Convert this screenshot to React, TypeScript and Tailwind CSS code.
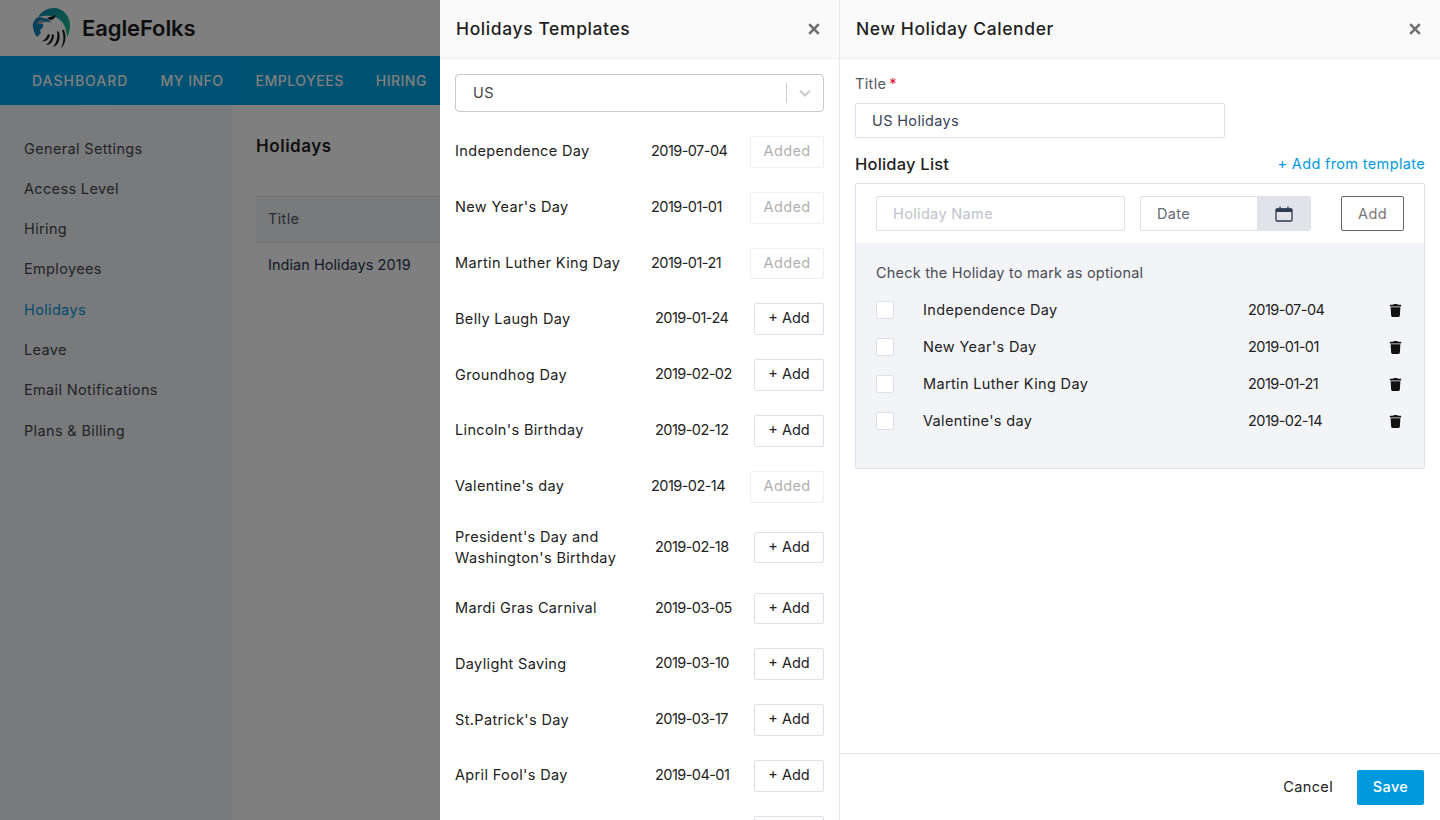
import React from "react";
import { FaTrash } from "react-icons/fa";

const side = ["General Settings", "Access Level", "Hiring", "Employees", "Holidays", "Leave", "Email Notifications", "Plans & Billing"];
const nav = ["DASHBOARD", "MY INFO", "EMPLOYEES", "HIRING"];
const templates: [string, string, boolean][] = [
  ["Independence Day", "2019-07-04", true],
  ["New Year's Day", "2019-01-01", true],
  ["Martin Luther King Day", "2019-01-21", true],
  ["Belly Laugh Day", "2019-01-24", false],
  ["Groundhog Day", "2019-02-02", false],
  ["Lincoln's Birthday", "2019-02-12", false],
  ["Valentine's day", "2019-02-14", true],
  ["President's Day and Washington's Birthday", "2019-02-18", false],
  ["Mardi Gras Carnival", "2019-03-05", false],
  ["Daylight Saving", "2019-03-10", false],
  ["St.Patrick's Day", "2019-03-17", false],
  ["April Fool's Day", "2019-04-01", false],
];
const chosen = [
  ["Independence Day", "2019-07-04"],
  ["New Year's Day", "2019-01-01"],
  ["Martin Luther King Day", "2019-01-21"],
  ["Valentine's day", "2019-02-14"],
];

function Close() {
  return (
    <svg width="12" height="12" viewBox="0 0 12 12" className="shrink-0">
      <path d="M1.2 1.2 10.8 10.8M10.8 1.2 1.2 10.8" stroke="#707070" strokeWidth="2.6" fill="none" />
    </svg>
  );
}

function Eagle() {
  return (
    <svg width="40" height="42" viewBox="0 0 40 42" className="shrink-0">
      <defs>
        <linearGradient id="eg" x1="0" y1="0" x2="1" y2="0.7">
          <stop offset="0" stopColor="#0a86b8" />
          <stop offset="1" stopColor="#19b88a" />
        </linearGradient>
      </defs>
      <path d="M6 10C10 4 16 1 22 1c9 0 16 8 16 17 0 4-1 9-3 12-.5-7-2-13-7-17-5-5-13-5-22-3z" fill="url(#eg)" />
      <path d="M1 21c-1-5 2-10 6-11l7 1.5c3 1 4 2 5 4-3-1-6-1-8 0l-5 .5c1 1 3 1 5 1 1 3-1 5-3 6l1 3c-2 2-3 3-4 4-2-2-3-5-4-9z" fill="#1285b8" />
      <path d="M5 15c2-2 5-2 8-1l-3 2.5c-2 .5-4 .5-5-1.5z" fill="#9aa0a4" />
      <path d="M15 11l9-3c-1 3-3 5-6 5z" fill="#151515" />
      <path d="M16 27c-1 3-3 6-6 7 4 1 7-2 8-6zM20 27c0 4-2 8-6 11 5 0 8-5 8-10zM25 24c1 6 0 11-4 16 5-1 8-8 6-15zM30 23c2 6 2 12-1 18 4-3 6-10 3-18z" fill="#161616" />
    </svg>
  );
}

function Calendar() {
  return (
    <svg width="18" height="16" viewBox="0 0 18 16" className="shrink-0">
      <path d="M1 3.5a1 1 0 0 1 1-1h14a1 1 0 0 1 1 1V6H1z" fill="#2c3a50" />
      <path d="M5 .5v3M13 .5v3" stroke="#2c3a50" strokeWidth="1.3" />
      <rect x="1" y="3" width="16" height="12" rx="1" fill="none" stroke="#2c3a50" strokeWidth="1.3" />
    </svg>
  );
}

function TemplateRow({ name, date, added }: { name: string; date: string; added: boolean }) {
  return (
    <div className="flex items-center">
      <div className="min-w-0 flex-1 -translate-y-px pr-[20px] leading-[21px] text-[#222]">{name}</div>
      <div className="w-[99px] shrink-0 -translate-y-px tracking-[-0.55px] text-[#222]">{date}</div>
      <div
        className={`flex h-[31.8px] shrink-0 items-center justify-center rounded-[2px] border ${
          added ? "w-[74px] border-[#f0f0f3] text-[#b0b0b0]" : "w-[70px] border-[#dfe1ea] tracking-[0px] text-[#222]"
        }`}
      >
        <span className="-translate-y-px">{added ? "Added" : "+ Add"}</span>
      </div>
    </div>
  );
}

export default function App() {
  return (
    <div className="relative h-[820px] w-full overflow-hidden bg-white font-['Inter','Liberation_Sans',sans-serif] text-[14.5px] tracking-[0.35px] text-[#222]">
      {/* Page under the overlay */}
      <div className="flex h-[56px] items-center gap-[10px] bg-white pl-[32px]">
        <Eagle />
        <span className="text-[22px] font-semibold tracking-[-0.1px] text-[#1b1b1b]">EagleFolks</span>
      </div>
      <div className="flex h-[49px] items-center gap-[32px] bg-gradient-to-r from-[#00a4ee] to-[#00a4c8] pl-[32px]">
        {nav.map((n) => (
          <span key={n} className={`text-[14px] font-medium text-white ${n === "DASHBOARD" ? "tracking-[1px]" : "tracking-[0.5px]"}`}>{n}</span>
        ))}
      </div>
      <div className="flex h-[715px]">
        <div className="flex w-[232px] shrink-0 flex-col gap-[19.3px] bg-[#f3f4f8] pl-[24px] pt-[32.5px]">
          {side.map((s) => (
            <div key={s} className={`leading-[21px] ${s === "Holidays" ? "text-[#0099dd]" : "text-[#44474f]"}`}>{s}</div>
          ))}
        </div>
        <div className="flex-1 pl-[24px] pt-[29px]">
          <div className="text-[17px] font-semibold leading-[24px] tracking-[0.55px] text-[#222]">Holidays</div>
          <div className="mt-[38px] flex h-[47px] items-center border-y border-[#dfe1ea] bg-[#f3f4f8] pb-[2px] pl-[12px] text-[#555a68]">Title</div>
          <div className="pl-[12px] pt-[11px] leading-[21px] tracking-[0.05px] text-[#2a3350]">Indian Holidays 2019</div>
        </div>
      </div>
      <div className="absolute inset-0 bg-black/50" />

      {/* Templates drawer */}
      <div className="absolute bottom-0 left-[440px] top-0 w-[400px] overflow-hidden border-r border-[#e6e8f0] bg-white">
        <div className="flex h-[59px] items-center justify-between border-b border-[#eeeef2] bg-[#fafafa] pl-[16px] pr-[19px]">
          <span className="text-[17.5px] font-medium tracking-[0.6px] text-[#1f1f1f]">Holidays Templates</span>
          <Close />
        </div>
        <div className="px-[15px] pt-[15px]">
          <div className="flex h-[38px] items-center rounded-[4px] border border-[#c8c9cf] pl-[17px]">
            <span className="flex-1 text-[#444]">US</span>
            <span className="h-[20px] w-px bg-[#cccccc]" />
            <svg width="12" height="8" viewBox="0 0 12 8" className="mx-[12px]">
              <path d="M1 1.5 6 6.5 11 1.5" stroke="#cccccc" strokeWidth="2" fill="none" />
            </svg>
          </div>
          <div className="mt-[24px] flex flex-col gap-[24px]">
            {templates.map(([name, date, added]) => (
              <TemplateRow key={name} name={name} date={date} added={added} />
            ))}
            <div className="ml-auto h-[31.8px] w-[70px] rounded-[2px] border border-[#dfe1ea]" />
          </div>
        </div>
      </div>

      {/* New calendar drawer */}
      <div className="absolute bottom-0 left-[840px] right-0 top-0 flex flex-col bg-white">
        <div className="flex h-[59px] shrink-0 items-center justify-between border-b border-[#eeeef2] bg-[#fafafa] pl-[16px] pr-[19px]">
          <span className="text-[17.5px] font-medium tracking-[0.6px] text-[#1f1f1f]">New Holiday Calender</span>
          <Close />
        </div>
        <div className="flex-1 px-[15px] pt-[14px]">
          <div className="leading-[21px] text-[#555a60]">Title<span className="ml-[3px] text-[#e8103c]">*</span></div>
          <div className="mt-[9px] flex h-[35px] w-[370px] items-center rounded-[2px] border border-[#dfe1ea] pl-[16px] text-[#3a4356]">US Holidays</div>
          <div className="mt-[14px] flex items-center justify-between leading-[24px]">
            <span className="text-[16.5px] font-medium tracking-[0.2px] text-[#1f1f1f]">Holiday List</span>
            <span className="text-[#0099dd]">+ Add from template</span>
          </div>
          <div className="mt-[7px] h-[286px] rounded-[2px] border border-[#dfe1ea]">
            <div className="flex h-[59px] pl-[20px] pt-[12px]">
              <div className="flex h-[35px] w-[249px] items-center rounded-[2px] border border-[#dfe1ea] pl-[16px] text-[#c0c3cc]">Holiday Name</div>
              <div className="ml-[15px] flex h-[35px] w-[171px] overflow-hidden rounded-[2px] border border-[#dfe1ea]">
                <div className="flex flex-1 items-center pl-[16px] text-[#666b75]">Date</div>
                <div className="flex w-[53px] items-center justify-center bg-[#e1e3e9]"><Calendar /></div>
              </div>
              <div className="ml-[30px] flex h-[35px] w-[63px] items-center justify-center rounded-[2px] border border-[#666] text-[#777]">Add</div>
            </div>
            <div className="h-[225px] bg-[#f3f4f8] pl-[20px] pr-[22px] pt-[19px]">
              <div className="leading-[21px] tracking-[0.2px] text-[#4a4d55]">Check the Holiday to mark as optional</div>
              <div className="mt-[16px] flex flex-col gap-[16px]">
                {chosen.map(([n, d]) => (
                  <div key={n} className="flex h-[21px] items-center">
                    <span className="h-[18px] w-[18px] shrink-0 rounded-[2px] border border-[#dfe1ea] bg-white" />
                    <span className="ml-[29px] w-[325px] shrink-0 text-[#222]">{n}</span>
                    <span className="flex-1 tracking-[-0.55px] text-[#222]">{d}</span>
                    <FaTrash className="mt-px text-[13px] text-[#111]" />
                  </div>
                ))}
              </div>
            </div>
          </div>
        </div>
        <div className="flex h-[67px] shrink-0 items-center justify-end gap-[24px] border-t border-[#e6e6f0] pr-[16px]">
          <span className="text-[#222]">Cancel</span>
          <span className="flex h-[35px] w-[67px] items-center justify-center rounded-[2px] bg-[#0099dd] font-medium text-white">Save</span>
        </div>
      </div>
    </div>
  );
}
